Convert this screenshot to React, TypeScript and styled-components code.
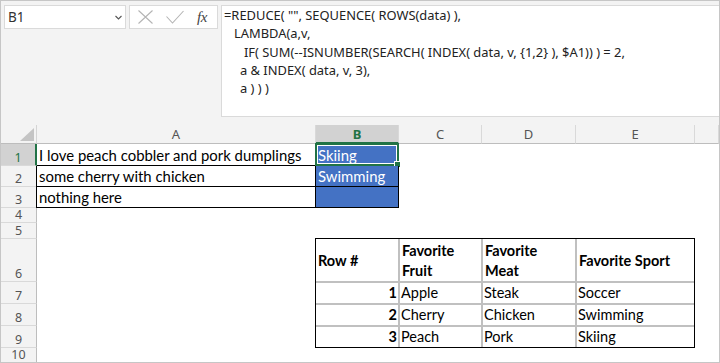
import React from "react";
import styled, { createGlobalStyle } from "styled-components";

const GlobalStyle = createGlobalStyle`
  html, body { margin: 0; padding: 0; background: #ffffff; }
  #root { width: 720px; height: 363px; }
`;

const GREEN = "#217346";
const BLUE = "#4472c4";

const formulaLines = [
  { indent: 0, text: '=REDUCE( "", SEQUENCE( ROWS(data) ),' },
  { indent: 10, text: "LAMBDA(a,v," },
  { indent: 20, text: "IF( SUM(--ISNUMBER(SEARCH( INDEX( data, v, {1,2} ), $A1)) ) = 2," },
  { indent: 16, text: "a & INDEX( data, v, 3)," },
  { indent: 16, text: "a ) ) )" },
];

const columns = ["A", "B", "C", "D", "E", ""];
const rowCount = 10;

const tableHeader = ["Row #", "Favorite\nFruit", "Favorite\nMeat", "Favorite Sport"];
const tableRows = [
  ["1", "Apple", "Steak", "Soccer"],
  ["2", "Cherry", "Chicken", "Swimming"],
  ["3", "Peach", "Pork", "Skiing"],
];

const inputRows = [
  { a: "I love peach cobbler and pork dumplings", b: "Skiing" },
  { a: "some cherry with chicken", b: "Swimming" },
  { a: "nothing here", b: "" },
];

const Window = styled.div`
  width: 720px;
  height: 363px;
  box-sizing: border-box;
  border: 1px solid #c6c6c6;
  background: #f3f3f3;
  display: flex;
  flex-direction: column;
  overflow: hidden;
  font-family: "Noto Sans", "Open Sans", sans-serif;
`;

const TopBar = styled.div`
  display: flex;
  align-items: flex-start;
  padding: 4px 0 0 3px;
`;

const NameBox = styled.div`
  width: 122px;
  height: 24px;
  box-sizing: border-box;
  background: #fff;
  border: 1px solid #dadada;
  display: flex;
  align-items: center;
  justify-content: space-between;
  padding: 0 3px 0 3px;
  font-size: 13.5px;
  color: #333;
`;

const IconBox = styled.div`
  width: 89px;
  height: 24px;
  margin-left: 3px;
  box-sizing: border-box;
  background: #fff;
  border: 1px solid #dadada;
  display: flex;
  align-items: center;
  padding-left: 7px;
`;

const IconSlot = styled.span<{ $gap: number }>`
  display: flex;
  margin-left: ${(p) => p.$gap}px;
`;

const Fx = styled.span`
  margin-left: 13px;
  font-family: "Liberation Serif", "DejaVu Serif", serif;
  font-style: italic;
  font-size: 15px;
  color: #444;
  letter-spacing: -0.5px;
`;

const FormulaBox = styled.div`
  flex: 1;
  height: 112px;
  margin-left: 3px;
  box-sizing: border-box;
  background: #fff;
  border: 1px solid #dadada;
  border-right: none;
  padding: 0 0 0 2px;
  font-size: 12.9px;
  line-height: 18.3px;
  color: #222;
`;

const FormulaLine = styled.div<{ $indent: number }>`
  padding-left: ${(p) => p.$indent}px;
  white-space: pre;
`;

const Sheet = styled.div`
  flex: 1;
  margin-top: 8px;
  display: grid;
  grid-template-columns: 36px 279px 83px 83px 94px 119px 1fr;
  grid-template-rows: 19px 22px 21px 21px 15px 16px 43px 22px 22px 22px 1fr;
  background: #fff;
`;

const Corner = styled.div`
  grid-column: 1;
  grid-row: 1;
  box-sizing: border-box;
  background: #f3f3f3;
  border-right: 1px solid #d4d4d4;
  border-bottom: 1px solid #bdbdbd;
  display: flex;
  align-items: flex-end;
  justify-content: flex-end;
  padding: 0 2px 2px 0;
`;

const ColHeader = styled.div<{ $col: number; $selected?: boolean }>`
  grid-column: ${(p) => p.$col};
  grid-row: 1;
  box-sizing: border-box;
  background: ${(p) => (p.$selected ? "#d2d2d2" : "#f3f3f3")};
  border-right: 1px solid #d9d9d9;
  border-bottom: ${(p) => (p.$selected ? `2px solid ${GREEN}` : "1px solid #bdbdbd")};
  display: flex;
  align-items: center;
  justify-content: center;
  font-size: 13px;
  font-weight: ${(p) => (p.$selected ? 700 : 400)};
  color: ${(p) => (p.$selected ? GREEN : "#555")};
`;

const RowHeader = styled.div<{ $row: number; $selected?: boolean }>`
  grid-column: 1;
  grid-row: ${(p) => p.$row};
  box-sizing: border-box;
  background: ${(p) => (p.$selected ? "#d2d2d2" : "#f3f3f3")};
  border-right: ${(p) => (p.$selected ? `2px solid ${GREEN}` : "1px solid #bdbdbd")};
  border-bottom: 1px solid #d9d9d9;
  display: flex;
  align-items: flex-end;
  justify-content: center;
  padding-bottom: 1px;
  font-size: 12.5px;
  line-height: 13px;
  color: ${(p) => (p.$selected ? GREEN : "#555")};
  overflow: hidden;
`;

const Cell = styled.div<{ $col: number; $row: number; $fill?: string; $color?: string; $leftEdge?: boolean }>`
  grid-column: ${(p) => p.$col};
  grid-row: ${(p) => p.$row};
  position: relative;
  box-sizing: border-box;
  background: ${(p) => p.$fill ?? "#fff"};
  border-right: 1px solid #000;
  border-bottom: 1px solid #000;
  box-shadow: ${(p) => (p.$leftEdge ? "-1px 0 0 #000" : "none")};
  display: flex;
  align-items: flex-end;
  padding: 0 0 1px 2px;
  font-family: Lato, "Liberation Sans", sans-serif;
  font-size: 14.9px;
  line-height: 18px;
  color: ${(p) => p.$color ?? "#000"};
  white-space: nowrap;
`;

const Selection = styled.div`
  position: absolute;
  top: -1px;
  left: -1px;
  right: -1px;
  bottom: -1px;
  border: 2px solid ${GREEN};
  box-shadow: inset 0 0 0 1px #fff;
  pointer-events: none;
`;

const FillHandle = styled.div`
  position: absolute;
  right: -4px;
  bottom: -4px;
  width: 5px;
  height: 5px;
  background: ${GREEN};
  border: 1px solid #fff;
`;

const DataTable = styled.div`
  grid-column: 3 / 7;
  grid-row: 7 / 11;
  margin: -1px 0 0 -1px;
  border: 1px solid #000;
  display: grid;
  grid-template-columns: 82px 81px 92px 117px;
  grid-template-rows: 42px 20px 20px 20px;
  gap: 2px;
  background: #c0c0c0;
  font-family: Lato, "Liberation Sans", sans-serif;
  font-size: 14.5px;
  color: #000;
`;

const TableCell = styled.div<{ $header?: boolean; $right?: boolean; $bold?: boolean }>`
  background: #fff;
  display: flex;
  align-items: ${(p) => (p.$header ? "center" : "flex-end")};
  justify-content: ${(p) => (p.$right ? "flex-end" : "flex-start")};
  padding: ${(p) => (p.$header ? "2px 0 0 2px" : p.$right ? "0 1px 0 0" : "0 0 0 1px")};
  font-weight: ${(p) => (p.$bold ? 700 : 400)};
  line-height: 20px;
  white-space: pre;
`;

function CrossIcon() {
  return (
    <svg width="15" height="14" viewBox="0 0 15 14">
      <path d="M0.5 0.5 L14.5 13.5 M14.5 0.5 L0.5 13.5" stroke="#b4b4b4" strokeWidth="1.1" fill="none" />
    </svg>
  );
}

function CheckIcon() {
  return (
    <svg width="18" height="14" viewBox="0 0 18 14">
      <path d="M0.5 6.5 L6.5 13 L17.5 1" stroke="#b4b4b4" strokeWidth="1.1" fill="none" />
    </svg>
  );
}

function Chevron() {
  return (
    <svg width="7" height="5" viewBox="0 0 7 5">
      <path d="M0.5 1 L3.5 4 L6.5 1" stroke="#555" strokeWidth="1.1" fill="none" />
    </svg>
  );
}

function CornerTriangle() {
  return (
    <svg width="14" height="13" viewBox="0 0 14 13">
      <path d="M14 0 L14 13 L0 13 Z" fill="#c4c4c4" />
    </svg>
  );
}

export default function App() {
  return (
    <>
      <GlobalStyle />
      <Window>
        <TopBar>
          <NameBox>
            <span>B1</span>
            <Chevron />
          </NameBox>
          <IconBox>
            <IconSlot $gap={1}>
              <CrossIcon />
            </IconSlot>
            <IconSlot $gap={13}>
              <CheckIcon />
            </IconSlot>
            <Fx>fx</Fx>
          </IconBox>
          <FormulaBox>
            {formulaLines.map((l, i) => (
              <FormulaLine key={i} $indent={l.indent}>
                {l.text}
              </FormulaLine>
            ))}
          </FormulaBox>
        </TopBar>

        <Sheet>
          <Corner>
            <CornerTriangle />
          </Corner>
          {columns.map((c, i) => (
            <ColHeader key={i} $col={i + 2} $selected={c === "B"}>
              {c}
            </ColHeader>
          ))}
          {Array.from({ length: rowCount }, (_, i) => (
            <RowHeader key={i} $row={i + 2} $selected={i === 0}>
              {i + 1}
            </RowHeader>
          ))}

          {inputRows.map((r, i) => (
            <React.Fragment key={i}>
              <Cell $col={2} $row={i + 2} $leftEdge={i > 0}>
                {r.a}
              </Cell>
              <Cell $col={3} $row={i + 2} $fill={BLUE} $color="#fff">
                {r.b}
                {i === 0 && (
                  <Selection>
                    <FillHandle />
                  </Selection>
                )}
              </Cell>
            </React.Fragment>
          ))}

          <DataTable>
            {tableHeader.map((h, i) => (
              <TableCell key={`h${i}`} $header $bold>
                {h}
              </TableCell>
            ))}
            {tableRows.map((row, r) =>
              row.map((v, c) => (
                <TableCell key={`${r}-${c}`} $right={c === 0} $bold={c === 0}>
                  {v}
                </TableCell>
              ))
            )}
          </DataTable>
        </Sheet>
      </Window>
    </>
  );
}
